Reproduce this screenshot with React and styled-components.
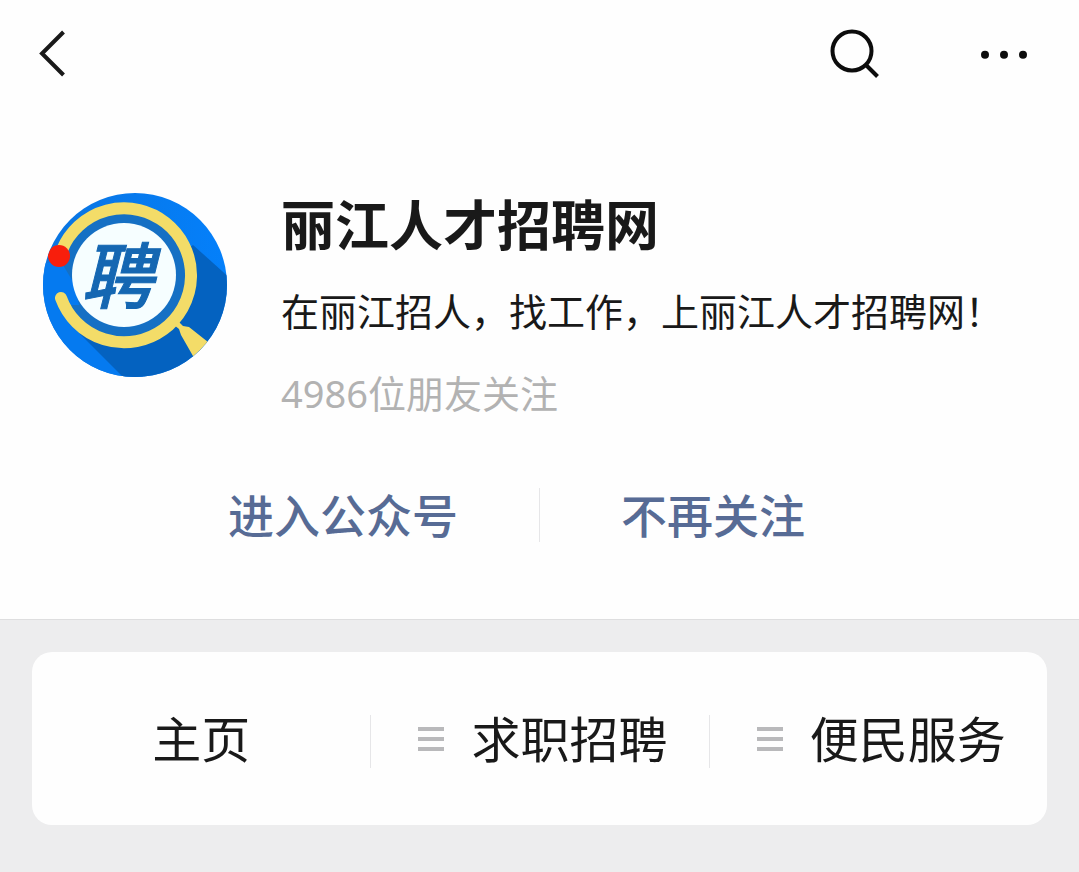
import styled, { createGlobalStyle } from "styled-components";

const menus = [
  { name: "主页", hasSub: false },
  { name: "求职招聘", hasSub: true },
  { name: "便民服务", hasSub: true },
];

const BackIcon = () => (
  <svg width="28" height="48" viewBox="0 0 28 48" fill="none">
    <path d="M25.5 2 L4 23.5 L25.5 45" stroke="#191919" strokeWidth="4" />
  </svg>
);

const SearchIcon = () => (
  <svg width="52" height="52" viewBox="0 0 52 52" fill="none">
    <circle cx="24" cy="23" r="19.5" stroke="#0c0c0c" strokeWidth="4" />
    <path d="M37.5 36.5 L49.5 48.5" stroke="#0c0c0c" strokeWidth="4" />
  </svg>
);

const MoreIcon = () => (
  <svg width="48" height="10" viewBox="0 0 48 10" fill="#0c0c0c">
    <circle cx="5" cy="5.8" r="4" />
    <circle cx="24" cy="5.8" r="4" />
    <circle cx="43" cy="5.8" r="4" />
  </svg>
);

const ListIcon = () => (
  <svg width="26" height="26" viewBox="0 0 26 26" fill="#b9b9bb">
    <rect y="1" width="26" height="4" />
    <rect y="11" width="26" height="4" />
    <rect y="21" width="26" height="4" />
  </svg>
);

const Logo = () => (
  <LogoSvg viewBox="0 0 184 184" role="img" aria-label="聘">
    <defs>
      <clipPath id="round">
        <circle cx="92" cy="92" r="92" />
      </clipPath>
      <linearGradient id="sky" x1="0" y1="0" x2="1" y2="0">
        <stop offset="0" stopColor="#0a74e0" />
        <stop offset="1" stopColor="#0480fb" />
      </linearGradient>
    </defs>
    <g clipPath="url(#round)">
      <rect width="184" height="184" fill="url(#sky)" />
      <path d="M0 70 L22 70 L100 184 H0 Z" fill="#057af0" />
      <path d="M150 52 L188 86 V184 H80 L36 140 Z" fill="#0462c0" />
      <circle cx="81" cy="83" r="64" fill="#1570c4" />
      {/* opening of the ring, under the red dot */}
      <path d="M8 70 L20 72 L32 92 L36 112 L8 112 Z" fill="#057af0" />
      <circle cx="81" cy="82" r="52" fill="#f6feff" />
      <path
        d="M18 105 A67 67 0 1 0 19 57"
        fill="none"
        stroke="#f3dc68"
        strokeWidth="12"
        strokeLinecap="round"
      />
      <path
        d="M131 132 L134 127 L140 133 L146 134 L170 153 L154 170 L138 142 L136 136 Z"
        fill="#f3dc68"
      />
      <circle cx="16" cy="63" r="11" fill="#f81e0c" />
      <LogoText x="74" y="110" textAnchor="middle">
        聘
      </LogoText>
    </g>
  </LogoSvg>
);

const App = () => {
  return (
    <Page>
      <GlobalStyle />
      <NavBar>
        <IconButton aria-label="返回">
          <BackIcon />
        </IconButton>
        <NavRight>
          <IconButton aria-label="搜索">
            <SearchIcon />
          </IconButton>
          <IconButton aria-label="更多">
            <MoreIcon />
          </IconButton>
        </NavRight>
      </NavBar>

      <Profile>
        <Logo />
        <Info>
          <Title>丽江人才招聘网</Title>
          <Intro>在丽江招人，找工作，上丽江人才招聘网！</Intro>
          <Followers>4986位朋友关注</Followers>
        </Info>
      </Profile>

      <Actions>
        <ActionButton>进入公众号</ActionButton>
        <Divider />
        <ActionButton>不再关注</ActionButton>
      </Actions>

      <Bottom>
        <Menu>
          {menus.map((menu) => (
            <MenuItem key={menu.name}>
              <MenuButton $hasSub={menu.hasSub}>
                {menu.hasSub && <ListIcon />}
                {menu.name}
              </MenuButton>
            </MenuItem>
          ))}
        </Menu>
      </Bottom>
    </Page>
  );
};

export default App;

const GlobalStyle = createGlobalStyle`
  * {
    box-sizing: border-box;
  }
  body {
    margin: 0;
    background-color: #ededee;
    color: #191919;
    font-family: "Noto Sans", "Noto Sans CJK SC", sans-serif;
  }
  button {
    padding: 0;
    border: none;
    background: none;
    color: inherit;
    font: inherit;
    cursor: pointer;
  }
`;

const Page = styled.div`
  display: flex;
  flex-direction: column;
  min-height: 100vh;
  background-color: #fefefe;
`;

const NavBar = styled.header`
  display: flex;
  align-items: center;
  justify-content: space-between;
  height: 108px;
  padding: 0 51px 0 38px;
`;

const NavRight = styled.div`
  display: flex;
  align-items: center;
  gap: 100px;
`;

const IconButton = styled.button`
  display: flex;
`;

const Profile = styled.section`
  display: flex;
  gap: 54px;
  padding: 79px 43px 0;
`;

const LogoSvg = styled.svg`
  flex-shrink: 0;
  width: 184px;
  height: 184px;
  margin-top: 6px;
`;

const LogoText = styled.text`
  fill: #1567b2;
  stroke: #1567b2;
  stroke-width: 1px;
  font-family: "Noto Sans CJK SC", sans-serif;
  font-size: 72px;
  font-style: italic;
  font-weight: 500;
`;

const Info = styled.div`
  display: flex;
  flex-direction: column;
`;

const Title = styled.h1`
  margin: 0;
  font-size: 54px;
  font-weight: 700;
  line-height: 76px;
`;

const Intro = styled.p`
  margin: 20px 0 0;
  font-size: 38px;
  line-height: 56px;
`;

const Followers = styled.p`
  margin: 26px 0 0;
  color: #b2b2b2;
  font-size: 38px;
  line-height: 56px;
`;

const Actions = styled.div`
  display: grid;
  grid-template-columns: 1fr 1px 1fr;
  align-items: center;
  gap: 81px;
  padding: 66px 0 76px;
`;

const Divider = styled.span`
  height: 54px;
  background-color: #e6e6e8;
`;

const ActionButton = styled.button`
  justify-self: start;
  color: #576b95;
  font-size: 46px;
  font-weight: 500;
  line-height: 56px;

  &:first-child {
    justify-self: end;
  }
`;

const Bottom = styled.footer`
  flex: 1;
  padding: 32px;
  border-top: 1px solid #dededf;
  background-color: #ededee;
`;

const Menu = styled.ul`
  display: grid;
  grid-template-columns: repeat(3, 1fr);
  margin: 0;
  padding: 63px 0 57px;
  border-radius: 20px;
  background-color: #fefefe;
  list-style: none;
`;

const MenuItem = styled.li`
  & + & {
    border-left: 1px solid #e6e6e8;
  }
`;

const MenuButton = styled.button`
  display: flex;
  align-items: center;
  justify-content: center;
  gap: 27px;
  width: 100%;
  padding: ${({ $hasSub }) => ($hasSub ? "0 0 5px 6px" : "0 0 5px")};
  font-size: 49px;
  line-height: 48px;
`;
